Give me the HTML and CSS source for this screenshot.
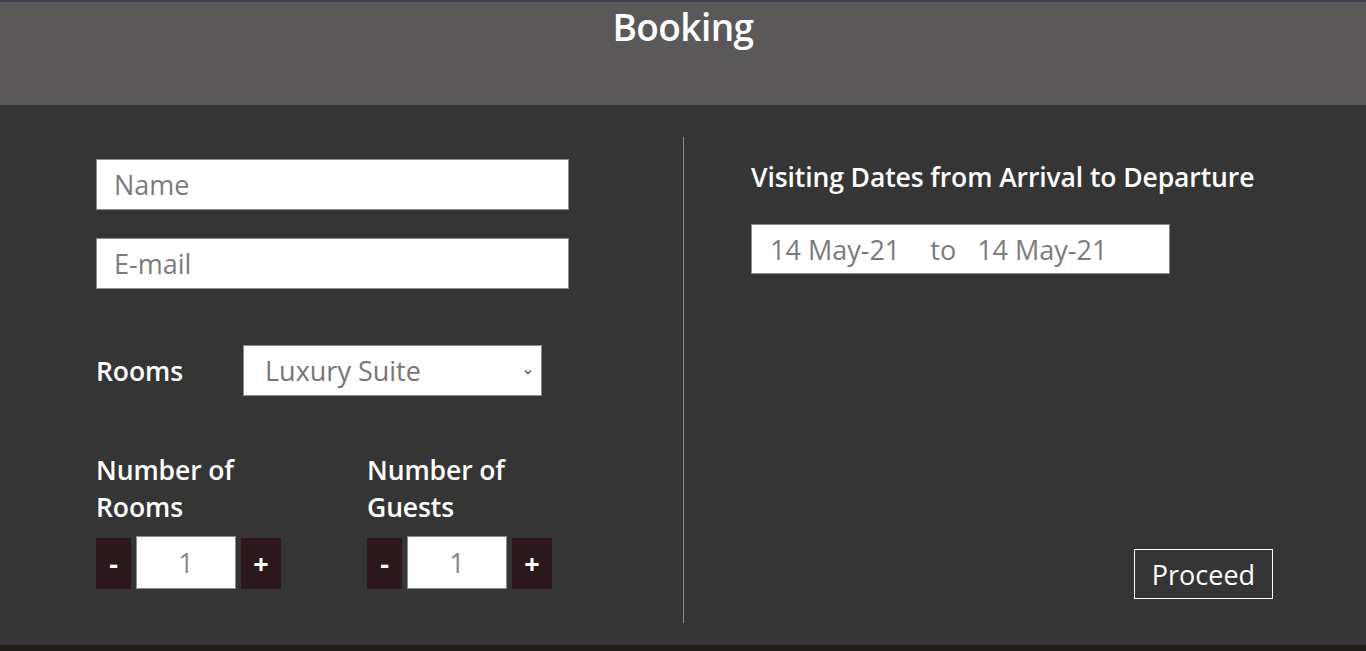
FILE: index.html
```html
<!DOCTYPE html>
<html>
<head>
<meta charset="utf-8">
<link rel="stylesheet" href="styles.css">
</head>
<body>
<div class="topline"></div>
<header class="header"><h1 class="title">Booking</h1></header>
<main class="main">
  <section class="left">
    <input class="field" type="text" placeholder="Name">
    <input class="field field-email" type="text" placeholder="E-mail">
    <div class="rooms-row">
      <label class="label rooms-label">Rooms</label>
      <div class="select">
        <span>Luxury Suite</span>
        <svg class="chev" width="10" height="6" viewBox="0 0 10 6"><path d="M2 1.5 L5 4.5 L8 1.5" fill="none" stroke="#555" stroke-width="1.3"/></svg>
      </div>
    </div>
    <div class="counters">
      <div class="counter-group">
        <div class="label counter-label">Number of<br>Rooms</div>
        <div class="counter">
          <button class="cbtn minus">-</button>
          <div class="cval">1</div>
          <button class="cbtn plus">+</button>
        </div>
      </div>
      <div class="counter-group">
        <div class="label counter-label">Number of<br>Guests</div>
        <div class="counter">
          <button class="cbtn minus">-</button>
          <div class="cval">1</div>
          <button class="cbtn plus">+</button>
        </div>
      </div>
    </div>
  </section>
  <section class="right">
    <h2 class="label dates-label">Visiting Dates from Arrival to Departure</h2>
    <div class="dates"><span>14 May-21</span><span class="to">to</span><span>14 May-21</span></div>
    <div class="proceed-row"><button class="proceed">Proceed</button></div>
  </section>
</main>
<div class="bottomline"></div>
</body>
</html>
```
FILE: styles.css
```css
* { box-sizing: border-box; }
html, body { margin: 0; padding: 0; }
body {
  width: 1366px;
  height: 651px;
  overflow: hidden;
  background: #353535;
  font-family: "Open Sans", sans-serif;
}
.topline { height: 2px; background: #3c3c4a; }
.header {
  height: 103px;
  background: #5a5858;
  display: flex;
  justify-content: center;
}
.title {
  margin: 0;
  padding-top: 3px;
  color: #fff;
  font-size: 37px;
  font-weight: 600;
  letter-spacing: -0.6px;
  line-height: 44px;
}
.main {
  height: 540px;
  display: flex;
  padding: 32px 0 22px;
  background: #353535;
}
.left {
  width: 684px;
  padding-left: 96px;
  padding-top: 22px;
  display: flex;
  flex-direction: column;
  border-right: 1px solid #8a8a8a;
}
.field {
  width: 473px;
  height: 51px;
  border: 1px solid #8a8a8a;
  background: #fff;
  padding: 0 17px;
  font-family: "Open Sans", sans-serif;
  font-size: 27px;
  color: #777;
  outline: none;
}
.field::placeholder { color: #7b7b7b; }
.field-email { margin-top: 28px; }
.label {
  color: #fff;
  font-size: 26.5px;
  font-weight: 600;
  letter-spacing: -0.1px;
  margin: 0;
}
.rooms-row {
  display: flex;
  align-items: center;
  margin-top: 56px;
}
.rooms-label { width: 147px; }
.select {
  width: 299px;
  height: 51px;
  background: #fff;
  border: 1px solid #8a8a8a;
  display: flex;
  align-items: center;
  justify-content: space-between;
  padding: 0 8px 0 21px;
  font-size: 27px;
  color: #777;
}
.chev { margin-top: 2px; }
.counters {
  display: flex;
  margin-top: 56px;
}
.counter-group { width: 271px; }
.counter-label { line-height: 37px; }
.counter {
  display: flex;
  align-items: center;
  gap: 5px;
  margin-top: 10px;
}
.cbtn {
  height: 51px;
  border: none;
  background: #2a181c;
  color: #fff;
  font-family: "Open Sans", sans-serif;
  font-size: 27px;
  font-weight: 700;
  padding: 0;
  margin-top: 2px;
}
.minus { width: 35px; }
.plus { width: 40px; }
.cval {
  width: 100px;
  height: 53px;
  background: #fff;
  border: 1px solid #8a8a8a;
  display: flex;
  align-items: center;
  justify-content: center;
  font-size: 27px;
  color: #888;
}
.right {
  flex: 1;
  padding-left: 67px;
  padding-right: 93px;
  padding-top: 22px;
  display: flex;
  flex-direction: column;
}
.dates-label { line-height: 36px; }
.dates {
  margin-top: 29px;
  width: 419px;
  height: 50px;
  background: #fff;
  border: 1px solid #8a8a8a;
  display: flex;
  align-items: center;
  padding-left: 18px;
  font-size: 27px;
  color: #7b7b7b;
  white-space: pre;
}
.to { margin: 0 21px 0 30px; }
.proceed-row {
  margin-top: auto;
  margin-bottom: 24px;
  display: flex;
  justify-content: flex-end;
}
.proceed {
  width: 139px;
  height: 50px;
  background: transparent;
  border: 1px solid #fff;
  color: #fff;
  font-family: "Open Sans", sans-serif;
  font-size: 27px;
  padding: 0;
}
.bottomline { height: 6px; background: #201e17; }
```
